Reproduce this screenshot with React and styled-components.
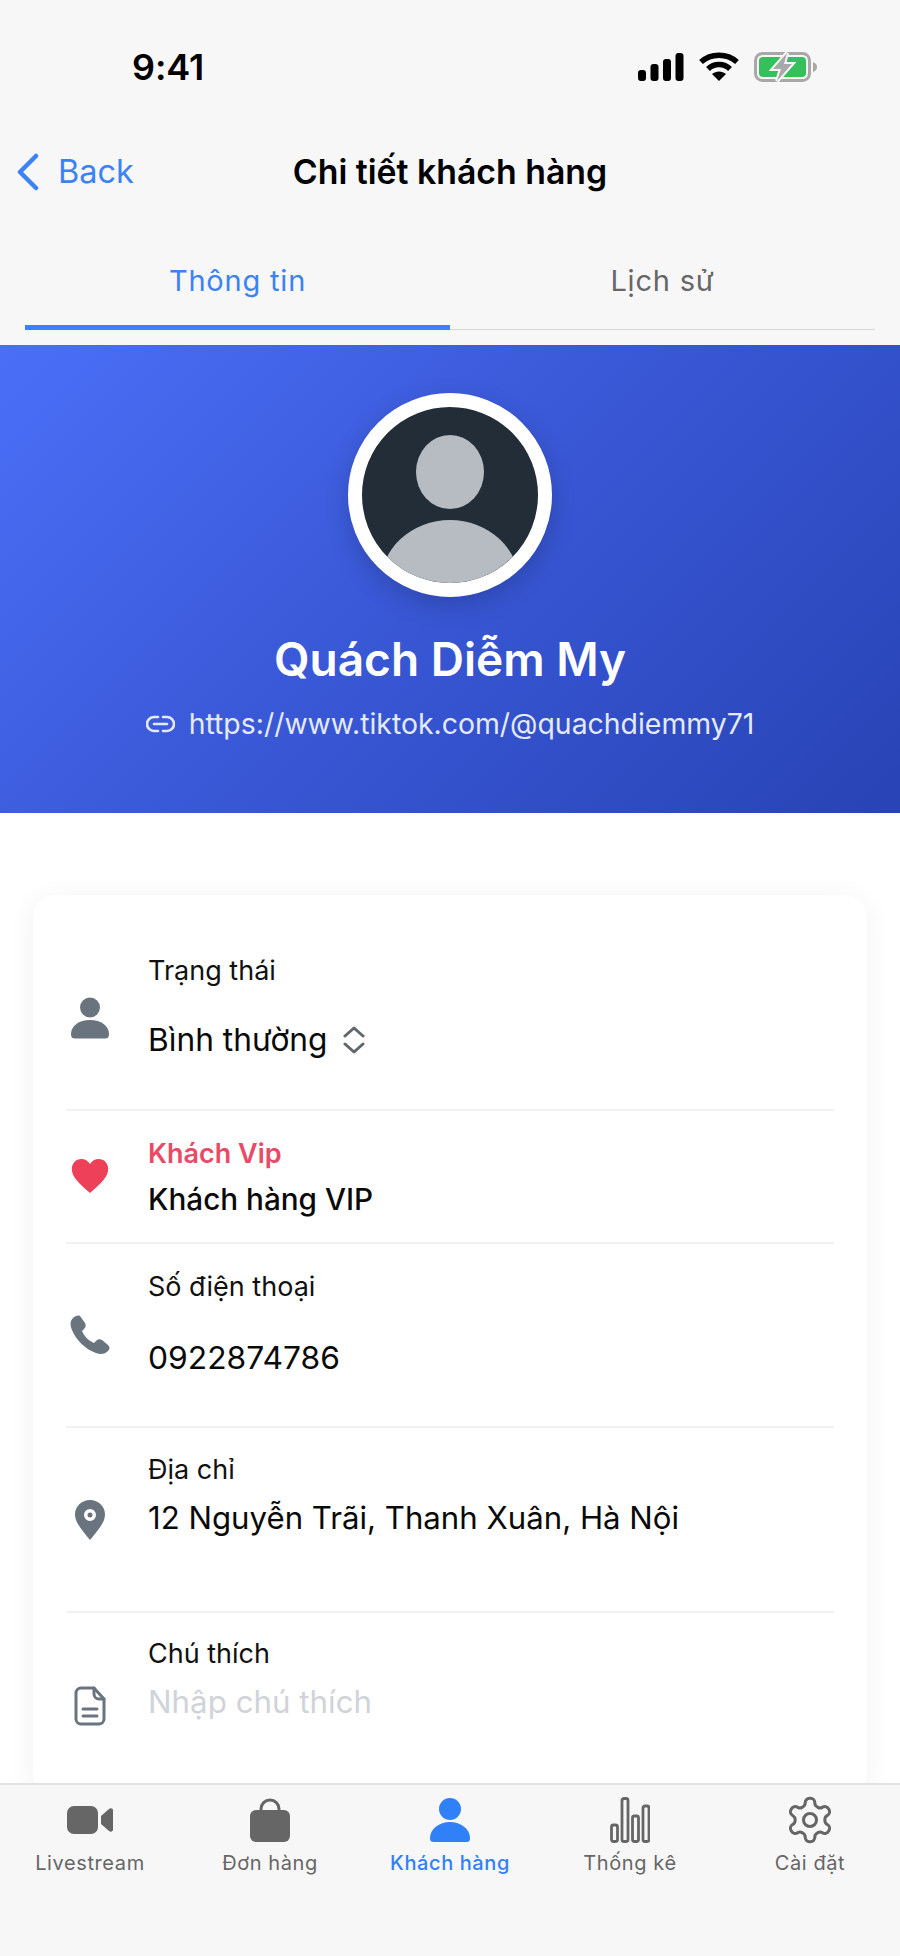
import React from 'react';
import styled, { createGlobalStyle } from 'styled-components';

const Global = createGlobalStyle`
  html, body { margin: 0; padding: 0; background: #fff; }
  * { box-sizing: border-box; }
  body { font-family: Inter, "Noto Sans", sans-serif; }
`;
const Screen = styled.div`
  position: relative; width: 900px; height: 1956px; overflow: hidden; background: #fff; color: #000;
`;
const TopArea = styled.header`
  background: #f7f7f7; height: 345px; display: flex; flex-direction: column;
`;
const StatusBar = styled.div`
  height: 134px; display: flex; align-items: center; justify-content: space-between; padding: 0 82px 0 132px;
`;
const StatusIcons = styled.div`
  display: flex; align-items: center; gap: 15px;
`;
const Clock = styled.span`
  font-size: 36px; font-weight: 600; letter-spacing: -0.1px; line-height: 1;
`;
const NavBar = styled.div`
  height: 76px; display: flex; align-items: center; position: relative; padding-left: 17px;
`;
const BackLink = styled.span`
  display: flex; align-items: center; gap: 19px; color: #3b82f6; font-size: 32.500px; line-height: 1;
`;
const Title = styled.h1`
  position: absolute; left: 0; right: 0; margin: 0; text-align: center; font-size: 33.800px; font-weight: 600; line-height: 1;
`;
const Tabs = styled.div`
  margin: 52px 25px 0; display: grid; grid-template-columns: 1fr 1fr; border-bottom: 1px solid #d6d6d6; height: 68px;
`;
const Tab = styled.div`
  display: flex; justify-content: center; padding-top: 1px; font-size: 29px; line-height: 36px; letter-spacing: 0.8px;
  color: ${p => p.$active ? '#3b82f6' : '#666'};
  border-bottom: ${p => p.$active ? '5px solid #3b82f6' : 'none'};
  height: ${p => p.$active ? '68px' : 'auto'};
`;
const Hero = styled.section`
  height: 468px; background: linear-gradient(135deg, #4a6ff7 0%, #3a59d8 45%, #2743b4 100%);
  display: flex; flex-direction: column; align-items: center; padding-top: 48px; color: #fff;
`;
const Avatar = styled.div`
  width: 204px; height: 204px; border-radius: 50%; border: 14px solid #fff; background: #222d37; overflow: hidden;
  box-shadow: 0 8px 24px rgba(0,0,0,0.18);
  svg { display: block; }
`;
const Name = styled.h2`
  margin: 34px 0 0; font-size: 46px; font-weight: 600; line-height: 56px;
`;
const LinkRow = styled.div`
  margin-top: 17px; display: flex; align-items: center; gap: 14px; font-size: 28.400px; line-height: 40px; color: #e4e9fb;
`;
const Card = styled.section`
  margin: 82px 33px 0; background: #fff; border-radius: 22px; box-shadow: 0 4px 28px rgba(0,0,0,0.06); padding: 0 33px; height: 900px;
`;
const Row = styled.div`
  height: ${p => p.$h}px; display: flex; align-items: center; border-bottom: ${p => p.$last ? 'none' : '2px solid #f1f1f1'};
`;
const IconCell = styled.div`
  width: 48px; flex: none; display: flex; justify-content: center; margin-right: 34px;
  color: #69747e; position: relative; top: ${p => p.$top || 0}px;
`;
const Fields = styled.div`
  flex: 1; display: flex; flex-direction: column; gap: ${p => p.$gap}px;
  padding-bottom: ${p => p.$pb || 0}px; padding-top: ${p => p.$pt || 0}px;
`;
const Label = styled.div`
  font-size: 27px; line-height: 34px; color: ${p => p.$vip ? '#e84a67' : '#111'}; font-weight: ${p => p.$vip ? 600 : 400};
`;
const Value = styled.div`
  display: flex; align-items: center; gap: 14px; line-height: 38px;
  font-size: ${p => p.$size || 31.3}px;
  font-weight: ${p => p.$strong ? 500 : 400};
  color: ${p => p.$placeholder ? '#d0d3d8' : '#0a0a0a'};
`;
const TabBar = styled.nav`
  position: absolute; left: 0; right: 0; bottom: 0; height: 173px; background: #f7f7f7; border-top: 2px solid #e2e2e2;
  display: grid; grid-template-columns: repeat(5, 180px);
`;
const TabItem = styled.div`
  display: flex; flex-direction: column; align-items: center; padding-top: 12px; color: ${p => p.$active ? '#3081f7' : '#666'};
  svg { display: block; flex: none; }
`;
const TabIcon = styled.div`
  height: 46px; display: flex; align-items: center; justify-content: center;
`;
const TabLabel = styled.span`
  margin-top: 6px; font-size: 20px; line-height: 28px; letter-spacing: 0.6px; font-weight: ${p => p.$active ? 500 : 400};
`;

const Signal = () => (
  <svg width="46" height="28" viewBox="0 0 46 28" fill="#000">
    <rect x="0" y="17" width="8" height="11" rx="3" /><rect x="12.500" y="11" width="8" height="17" rx="3" />
    <rect x="25" y="6" width="8" height="22" rx="3" /><rect x="37.500" y="0" width="8" height="28" rx="3" />
  </svg>
);
const Wifi = () => (
  <svg width="40" height="30" viewBox="0 0 40 30" fill="none" stroke="#000" strokeWidth="5.500">
    <path d="M2 10C12 1 28 1 38 10" /><path d="M9 17C15 11 25 11 31 17" />
    <path d="M13 22L20 29L27 22C23 18.500 17 18.500 13 22Z" fill="#000" stroke="none" />
  </svg>
);
const Battery = () => (
  <svg width="64" height="30" viewBox="0 0 64 30">
    <rect x="1.500" y="1.500" width="54" height="27" rx="7" fill="none" stroke="#a8a8a8" strokeWidth="3" />
    <rect x="5" y="5" width="47" height="20" rx="4" fill="#34c15c" />
    <path d="M59 10c3 1 4 3 4 5s-1 4-4 5z" fill="#a8a8a8" />
    <path d="M33 1L19 17H27L23 29L38 12H30Z" fill="#a9a9a9" stroke="#f7f7f7" strokeWidth="4" paintOrder="stroke" />
  </svg>
);

export default function App() {
  return (
    <Screen>
      <Global />
      <TopArea>
        <StatusBar>
          <Clock>9:41</Clock>
          <StatusIcons>
            <Signal /><Wifi /><Battery />
          </StatusIcons>
        </StatusBar>
        <NavBar>
          <BackLink>
            <svg width="22" height="38" viewBox="0 0 22 38" fill="none" stroke="#3b82f6" strokeWidth="4.500" strokeLinecap="round" strokeLinejoin="round">
              <path d="M19 3L3 19L19 35" />
            </svg>
            Back
          </BackLink>
          <Title>Chi tiết khách hàng</Title>
        </NavBar>
        <Tabs>
          <Tab $active>Thông tin</Tab>
          <Tab>Lịch sử</Tab>
        </Tabs>
      </TopArea>
      <Hero>
        <Avatar>
          <svg width="176" height="176" viewBox="0 0 176 176">
            <ellipse cx="88" cy="65" rx="34" ry="37" fill="#b6bcc2" />
            <ellipse cx="88" cy="178" rx="70" ry="65" fill="#b6bcc2" />
          </svg>
        </Avatar>
        <Name>Quách Diễm My</Name>
        <LinkRow>
          <svg width="29" height="18" viewBox="0 0 29 18" fill="none" stroke="#e4e9fb" strokeWidth="2.600" strokeLinecap="round">
            <path d="M12 2H8a7 7 0 0 0 0 14h4" /><path d="M17 2h4a7 7 0 0 1 0 14h-4" /><path d="M8 9h13" />
          </svg>
          https://www.tiktok.com/@quachdiemmy71
        </LinkRow>
      </Hero>
      <Card>
        <Row $h={216}>
          <IconCell $top={16}>
            <svg width="38" height="42" viewBox="0 0 38 42" fill="currentColor"><circle cx="19" cy="10.500" r="10" /><path d="M0 37C0 29 8 23 19 23s19 6 19 14c0 3-1 4.500-4 4.500H4C1 41.500 0 40 0 37Z" /></svg>
          </IconCell>
          <Fields $gap={33} $pt={8}>
            <Label>Trạng thái</Label>
            <Value $size={31.7}>Bình thường
              <svg width="24" height="28" viewBox="0 0 24 28" fill="none" stroke="#5f666d" strokeWidth="3" strokeLinecap="round" strokeLinejoin="round"><path d="M3 10l9-8 9 8" /><path d="M3 18l9 8 9-8" /></svg>
            </Value>
          </Fields>
        </Row>
        <Row $h={133}>
          <IconCell $top={-1}>
            <svg width="38" height="35" viewBox="0 0 24 22" fill="#ee4058"><path d="M12 22C5 16 .5 12 .5 6.800.5 3 3.300.500 6.500.500 8.800.500 10.800 1.700 12 3.700 13.200 1.700 15.200.500 17.500.500 20.700.500 23.500 3 23.500 6.800 23.500 12 19 16 12 22Z" /></svg>
          </IconCell>
          <Fields $gap={9} $pt={2}>
            <Label $vip>Khách Vip</Label>
            <Value $strong $size={29.7}>Khách hàng VIP</Value>
          </Fields>
        </Row>
        <Row $h={184}>
          <IconCell>
            <svg width="40" height="40" viewBox="0 0 40 40" fill="currentColor"><path d="M10 1C8 0 5 1 3 3C0 6 0 10 2 15C6 25 15 34 26 38C31 40 35 39 38 36C40 34 40 32 38 30L32 25C30 24 28 24 26 26L24 28C19 26 14 21 12 16L14 14C16 12 16 10 15 8Z" /></svg>
          </IconCell>
          <Fields $gap={35} $pb={24}>
            <Label>Số điện thoại</Label>
            <Value $size={31.8}>0922874786</Value>
          </Fields>
        </Row>
        <Row $h={185}>
          <IconCell>
            <svg width="30" height="40" viewBox="0 0 30 40" fill="currentColor"><path fillRule="evenodd" d="M15 40C6 29 0 22 0 14.500 0 6.500 6.500 0 15 0s15 6.500 15 14.500C30 22 24 29 15 40Zm0-19a6 6 0 1 0 0-12 6 6 0 0 0 0 12Zm0-3.500a2.500 2.500 0 1 1 0-5 2.500 2.500 0 0 1 0 5Z" /></svg>
          </IconCell>
          <Fields $gap={12} $pb={50}>
            <Label>Địa chỉ</Label>
            <Value $size={31.2}>12 Nguyễn Trãi, Thanh Xuân, Hà Nội</Value>
          </Fields>
        </Row>
        <Row $h={170} $last>
          <IconCell $top={8}>
            <svg width="32" height="40" viewBox="0 0 32 40" fill="none" stroke="currentColor" strokeWidth="3" strokeLinejoin="round" strokeLinecap="round"><path d="M20 2H7a5 5 0 0 0-5 5v26a5 5 0 0 0 5 5h18a5 5 0 0 0 5-5V13Z" /><path d="M20 2v6a5 5 0 0 0 5 5h5" /><path d="M9 23h14M9 30h14" /></svg>
          </IconCell>
          <Fields $gap={12} $pb={38}>
            <Label>Chú thích</Label>
            <Value $placeholder>Nhập chú thích</Value>
          </Fields>
        </Row>
      </Card>
      <TabBar>
        <TabItem>
          <TabIcon><svg width="46" height="28" viewBox="0 0 46 28" fill="currentColor"><rect x="0" y="0" width="31" height="28" rx="7" /><path d="M34 10l8-7c2-1.500 4-.5 4 1.500v19c0 2-2 3-4 1.500l-8-7Z" /></svg></TabIcon>
          <TabLabel>Livestream</TabLabel>
        </TabItem>
        <TabItem>
          <TabIcon><svg width="40" height="44" viewBox="0 0 40 44" fill="currentColor"><path d="M11 13V11a9 9 0 0 1 18 0v2" fill="none" stroke="currentColor" strokeWidth="3" /><rect x="0" y="12" width="40" height="32" rx="6" /></svg></TabIcon>
          <TabLabel>Đơn hàng</TabLabel>
        </TabItem>
        <TabItem $active>
          <TabIcon><svg width="40" height="44" viewBox="0 0 40 44" fill="currentColor"><circle cx="20" cy="11" r="11" /><path d="M0 40C0 31 9 24 20 24s20 7 20 16c0 3-1 4-4 4H4c-3 0-4-1-4-4Z" /></svg></TabIcon>
          <TabLabel $active>Khách hàng</TabLabel>
        </TabItem>
        <TabItem>
          <TabIcon><svg width="40" height="46" viewBox="0 0 40 46" fill="none" stroke="currentColor" strokeWidth="2.800"><rect x="1.500" y="28" width="6" height="16.500" rx="2" /><rect x="12" y="1.500" width="6" height="43" rx="2" /><rect x="22.500" y="19" width="6" height="25.500" rx="2" /><rect x="33" y="9" width="6" height="35.500" rx="2" /></svg></TabIcon>
          <TabLabel>Thống kê</TabLabel>
        </TabItem>
        <TabItem>
          <TabIcon><svg width="52" height="52" viewBox="0 0 24 24" fill="none" stroke="currentColor" strokeWidth="1.400" strokeLinecap="round" strokeLinejoin="round"><path d="M12.220 2h-.44a2 2 0 0 0-2 2v.18a2 2 0 0 1-1 1.730l-.43.250a2 2 0 0 1-2 0l-.15-.08a2 2 0 0 0-2.730.730l-.22.380a2 2 0 0 0 .730 2.730l.15.100a2 2 0 0 1 1 1.720v.510a2 2 0 0 1-1 1.740l-.15.090a2 2 0 0 0-.730 2.730l.22.380a2 2 0 0 0 2.730.730l.15-.08a2 2 0 0 1 2 0l.43.250a2 2 0 0 1 1 1.730V20a2 2 0 0 0 2 2h.44a2 2 0 0 0 2-2v-.18a2 2 0 0 1 1-1.730l.43-.250a2 2 0 0 1 2 0l.15.080a2 2 0 0 0 2.730-.730l.22-.390a2 2 0 0 0-.730-2.730l-.15-.080a2 2 0 0 1-1-1.740v-.500a2 2 0 0 1 1-1.740l.15-.090a2 2 0 0 0 .730-2.730l-.22-.380a2 2 0 0 0-2.730-.730l-.15.080a2 2 0 0 1-2 0l-.43-.250a2 2 0 0 1-1-1.730V4a2 2 0 0 0-2-2z" /><circle cx="12" cy="12" r="3" /></svg></TabIcon>
          <TabLabel>Cài đặt</TabLabel>
        </TabItem>
      </TabBar>
    </Screen>
  );
}
